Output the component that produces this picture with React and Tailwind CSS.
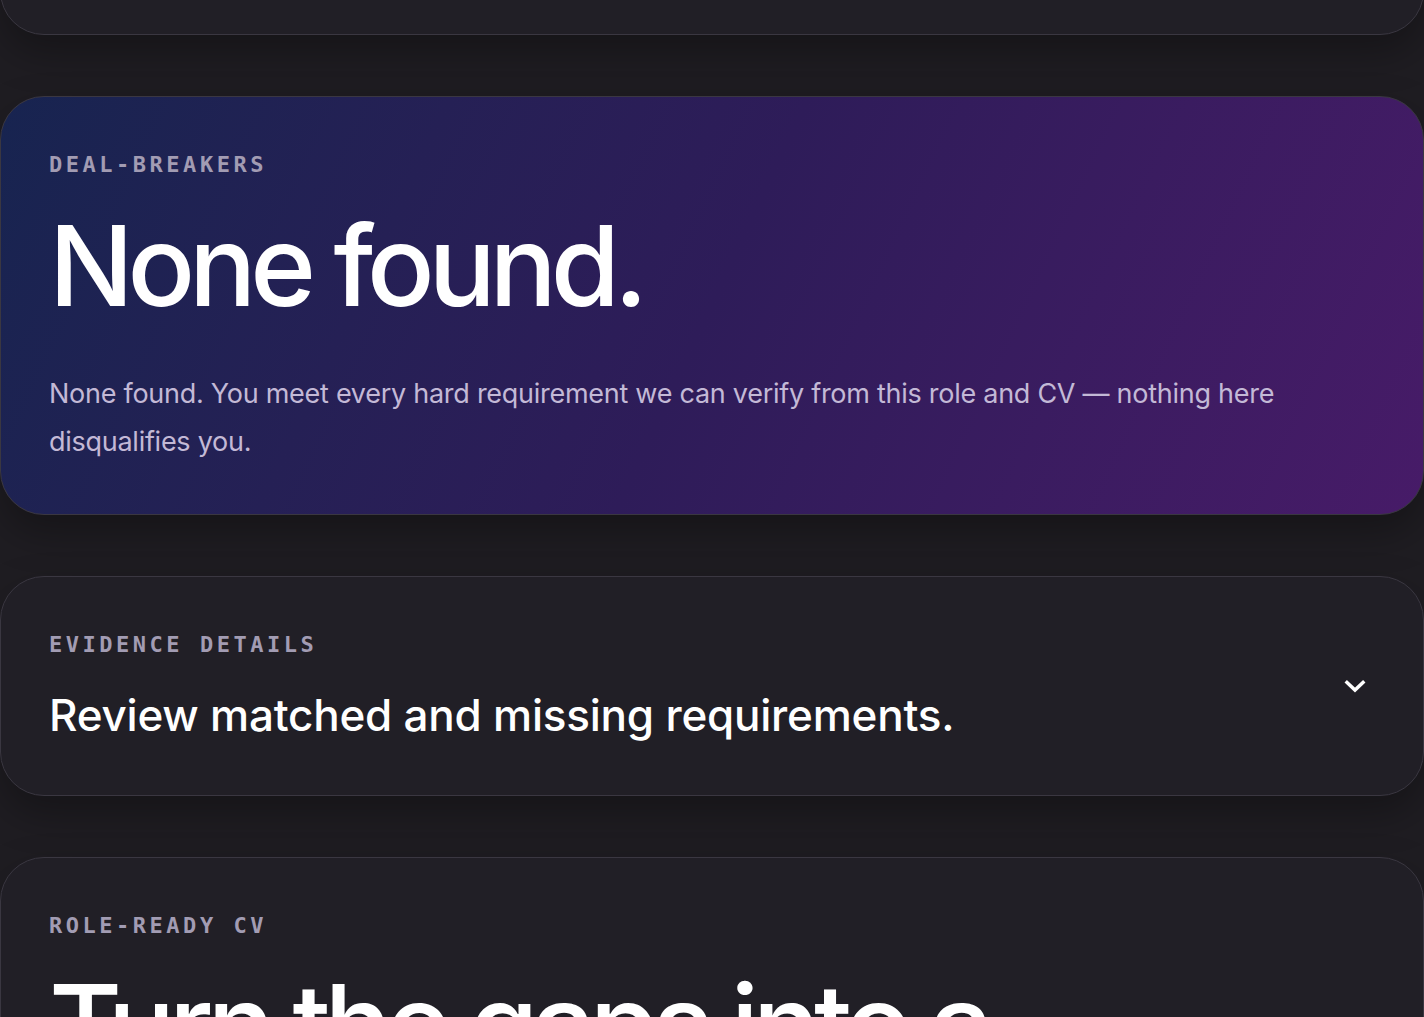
import React from 'react';

// Mono eyebrow label used at the top of every card
const Eyebrow = ({ children }) => (
  <div className="font-['DejaVu_Sans_Mono',monospace] font-bold text-[22px] leading-[40px] tracking-[0.16em] uppercase text-[#a29cb3]">
    {children}
  </div>
);

const Card = ({ className = '', children }) => (
  <section
    className={`rounded-[44px] border border-[#3a3741] shadow-[0_18px_40px_rgba(0,0,0,0.3)] px-12 pt-12 ${className}`}
  >
    {children}
  </section>
);

const App = () => {
  return (
    <div className="min-h-screen bg-[#1f1d22] overflow-hidden font-['Inter',sans-serif]">
      <div className="flex flex-col gap-[61px]">
        {/* Previous card, scrolled mostly out of view */}
        <Card className="bg-[#211f26] h-[300px] -mt-[265px]" />

        {/* Deal-breakers */}
        <Card className="pb-12 bg-linear-115 from-[#172450] via-[#2e1c59] to-[#471b68]">
          <Eyebrow>Deal-breakers</Eyebrow>
          <h2 className="mt-[24px] text-[112px] leading-none font-medium tracking-[-0.055em] text-white">
            None found.
          </h2>
          <p className="mt-[49px] text-[27px] leading-[48px] tracking-[-0.01em] text-[#c3b9d6]">
            None found. You meet every hard requirement we can verify from this role and CV — nothing here
            disqualifies you.
          </p>
        </Card>

        {/* Evidence details (collapsed) */}
        <Card className="pb-[51px] bg-[#211f26]">
          <div className="flex items-center justify-between">
            <div>
              <Eyebrow>Evidence details</Eyebrow>
              <h3 className="mt-[21px] text-[44px] leading-[58px] font-medium tracking-[-0.005em] text-white">
                Review matched and missing requirements.
              </h3>
            </div>
            <button className="w-10 h-10 mt-[2px] flex items-center justify-center text-white">
              <svg width="24" height="24" viewBox="0 0 24 24" fill="none" stroke="currentColor" strokeWidth="3.5" strokeLinecap="square" strokeLinejoin="miter">
                <polyline points="4 8.5 12 16 20 8.5" />
              </svg>
            </button>
          </div>
        </Card>

        {/* Role-ready CV */}
        <Card className="bg-[#211f26] h-[600px]">
          <Eyebrow>Role-ready CV</Eyebrow>
          <h2 className="mt-[22px] text-[112px] leading-none font-medium tracking-[-0.055em] text-white">
            Turn the gaps into a stronger CV.
          </h2>
        </Card>
      </div>
    </div>
  );
};

export default App;
